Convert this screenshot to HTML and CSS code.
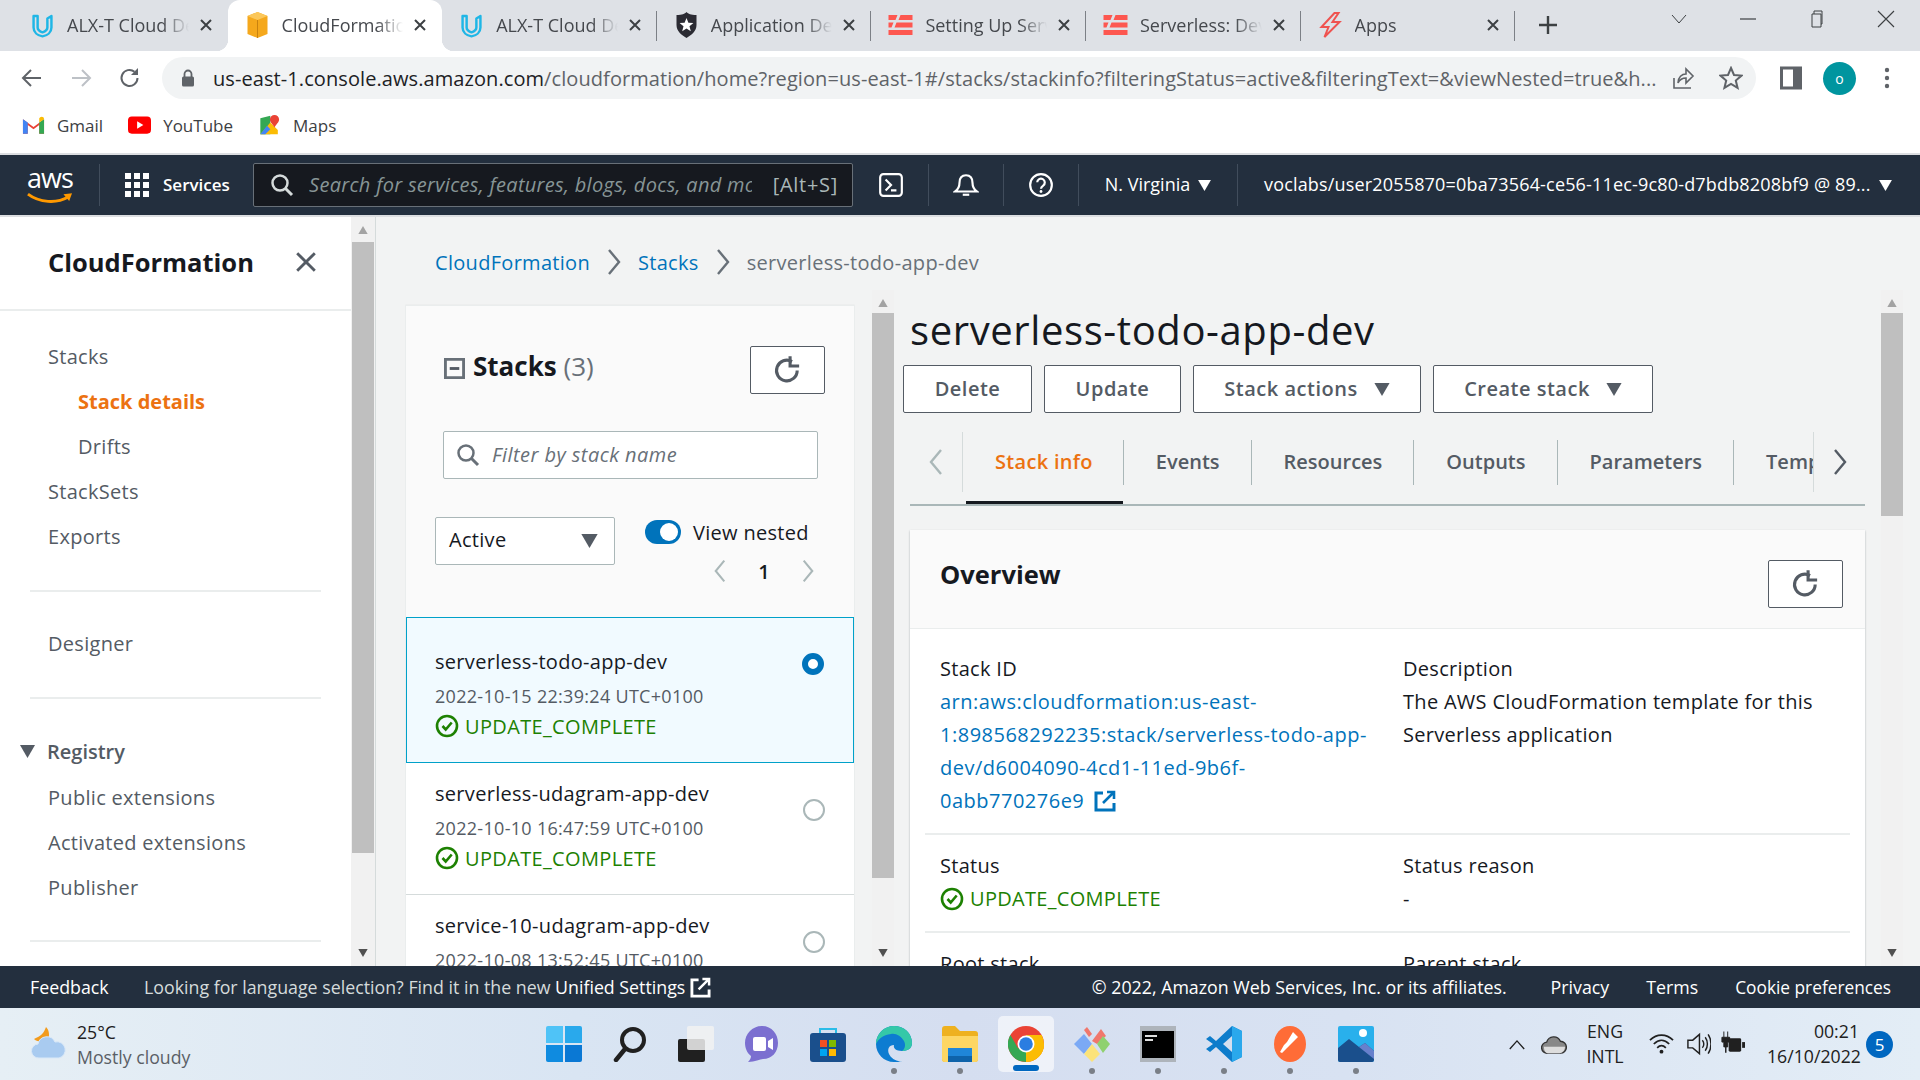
FILE: index.html
```html
<!DOCTYPE html>
<html lang="en">
<head>
<meta charset="utf-8">
<title>CloudFormation - Stack</title>
<link rel="stylesheet" href="styles.css">
</head>
<body>
<svg class="defs" width="0" height="0">
  <symbol id="x" viewBox="0 0 14 14"><path d="M2 2l10 10M12 2L2 12" fill="none" stroke="currentColor" stroke-width="2"/></symbol>
  <symbol id="udacity" viewBox="0 0 26 32"><path d="M2 5v14c0 6 5 10 11 11 6-1 11-5 11-11V5l-5 3v11c0 3-3 5-6 6-3-1-6-3-6-6V5z" fill="none" stroke="#1fb6e6" stroke-width="3" stroke-linejoin="round"/></symbol>
  <symbol id="sls" viewBox="0 0 24 20"><path d="M0 0h9l-2 5H0zM12 0h12v5H10zM0 7.500h5l-2 5H0zM8 7.500h16v5H6zM0 15h24v5H0z" fill="#fd5750"/></symbol>
  <symbol id="refresh" viewBox="0 0 24 24"><path d="M19.500 12a8 8 0 1 1-4-6.900" fill="none" stroke="currentColor" stroke-width="2.400"/><path d="M14 1v7.500h7" fill="none" stroke="currentColor" stroke-width="2.400"/></symbol>
  <symbol id="check" viewBox="0 0 24 24"><circle cx="12" cy="12" r="10" fill="none" stroke="currentColor" stroke-width="2.600"/><path d="M7.500 12l3.200 3.500 6-7" fill="none" stroke="currentColor" stroke-width="2.600"/></symbol>
  <symbol id="ext" viewBox="0 0 22 22"><path d="M9 3H2v17h18v-7" fill="none" stroke="currentColor" stroke-width="3"/><path d="M13 2h7v7M20 2L9 13" fill="none" stroke="currentColor" stroke-width="2.600"/></symbol>
  <symbol id="tri" viewBox="0 0 14 12"><path d="M0 0h14L7 12z" fill="currentColor"/></symbol>
  <symbol id="search" viewBox="0 0 24 24"><circle cx="10" cy="10" r="7.500" fill="none" stroke="currentColor" stroke-width="2.500"/><path d="M15.500 15.500L22 22" stroke="currentColor" stroke-width="3"/></symbol>
  <symbol id="chevl" viewBox="0 0 16 28"><path d="M13 2L3 14l10 12" fill="none" stroke="currentColor" stroke-width="2.400"/></symbol>
  <symbol id="chevr" viewBox="0 0 16 28"><path d="M3 2l10 12L3 26" fill="none" stroke="currentColor" stroke-width="2.400"/></symbol>
</svg>

<div class="tabstrip">
  <div class="tab"><svg class="favicon"><use href="#udacity"/></svg><span class="tab-title">ALX-T Cloud Developer</span><svg class="tab-x"><use href="#x"/></svg></div>
  <div class="tab tab-active"><svg class="favicon" viewBox="0 0 24 26"><path d="M12 0l10 4v18l-10 4-10-4V4z" fill="#f5a81c"/><path d="M12 0l10 4-10 4L2 4z" fill="#fbc75a"/><path d="M11.500 8h1v18h-1z" fill="#c9820f"/></svg><span class="tab-title">CloudFormation - Stack</span><svg class="tab-x"><use href="#x"/></svg></div>
  <div class="tab tab-sep"><svg class="favicon"><use href="#udacity"/></svg><span class="tab-title">ALX-T Cloud Developer</span><svg class="tab-x"><use href="#x"/></svg></div>
  <div class="tab tab-sep"><svg class="favicon" viewBox="0 0 24 26"><path d="M2 3c6 0 8-1 10-3 2 2 4 3 10 3v10c0 6-5 10-10 13C7 23 2 19 2 13z" fill="#2b2b33"/><path d="M12 6l1.900 4.800 5 .3-3.900 3.200 1.300 5L12 16.500l-4.300 2.800 1.300-5-3.900-3.200 5-.3z" fill="#fff"/></svg><span class="tab-title">Application Details</span><svg class="tab-x"><use href="#x"/></svg></div>
  <div class="tab tab-sep"><svg class="favicon favicon-sls"><use href="#sls"/></svg><span class="tab-title">Setting Up Serverless</span><svg class="tab-x"><use href="#x"/></svg></div>
  <div class="tab tab-sep"><svg class="favicon favicon-sls"><use href="#sls"/></svg><span class="tab-title">Serverless: Develop</span><svg class="tab-x"><use href="#x"/></svg></div>
  <div class="tab tab-sep"><svg class="favicon" viewBox="0 0 24 26"><path d="M16 1L3 15h7L6 25l15-15h-7l6-9z" fill="none" stroke="#ef5350" stroke-width="2"/></svg><span class="tab-title">Apps</span><svg class="tab-x"><use href="#x"/></svg></div>
  <svg class="newtab" viewBox="0 0 20 20"><path d="M10 1v18M1 10h18" stroke="#3c4043" stroke-width="2.400"/></svg>
  <div class="winctl">
    <svg class="win-ic" viewBox="0 0 20 20"><path d="M3 6l7 8 7-8" fill="none" stroke="#3c4043"/></svg>
    <svg class="win-ic" viewBox="0 0 20 20"><path d="M2 10h16" stroke="#3c4043" stroke-width="1.200"/></svg>
    <svg class="win-ic" viewBox="0 0 20 20"><path d="M5 5h9v13H5zM7 5V2h8v13h-1" fill="none" stroke="#3c4043"/></svg>
    <svg class="win-ic" viewBox="0 0 20 20"><path d="M2 2l16 16M18 2L2 18" stroke="#3c4043" stroke-width="1.100"/></svg>
  </div>
</div>

<div class="toolbar">
  <svg class="tb-ic" viewBox="0 0 24 24"><path d="M21 12H4M11 4l-8 8 8 8" fill="none" stroke="#5f6368" stroke-width="2"/></svg>
  <svg class="tb-ic" viewBox="0 0 24 24"><path d="M3 12h17M13 4l8 8-8 8" fill="none" stroke="#bdc1c6" stroke-width="2"/></svg>
  <svg class="tb-ic" viewBox="0 0 24 24"><path d="M19.500 12a8 8 0 1 1-3-6.300" fill="none" stroke="#5f6368" stroke-width="2"/><path d="M20 2v7h-7z" fill="#5f6368"/></svg>
  <div class="omnibox">
    <svg class="lock" viewBox="0 0 14 18"><path d="M3.500 8V5a3.500 3.500 0 0 1 7 0v3" fill="none" stroke="#5f6368" stroke-width="1.800"/><rect x="1" y="7.500" width="12" height="10" rx="1.500" fill="#5f6368"/></svg>
    <div class="url"><span class="url-host">us-east-1.console.aws.amazon.com</span>/cloudformation/home?region=us-east-1#/stacks/stackinfo?filteringStatus=active&amp;filteringText=&amp;viewNested=true&amp;h...</div>
    <svg class="omni-ic" viewBox="0 0 24 24"><path d="M3 12v10h17" fill="none" stroke="#5f6368" stroke-width="1.600"/><path d="M7 17c0-6 4-9 8-9V3l7 7-7 7v-5c-3 0-6 1-8 5z" fill="none" stroke="#5f6368" stroke-width="1.600"/></svg>
    <svg class="omni-ic omni-ic-star" viewBox="0 0 24 24"><path d="M12 2l3 7 7.500.6-5.700 4.900 1.800 7.400L12 18l-6.600 3.900 1.800-7.400L1.500 9.600 9 9z" fill="none" stroke="#5f6368" stroke-width="2"/></svg>
  </div>
  <svg class="panel-ic" viewBox="0 0 22 24"><path d="M1.500 2h19v20h-19z" fill="none" stroke="#5f6368" stroke-width="3"/><path d="M13 2h8v20h-8z" fill="#5f6368"/></svg>
  <div class="avatar">o</div>
  <svg class="dots" viewBox="0 0 6 24"><circle cx="3" cy="4" r="2.200" fill="#5f6368"/><circle cx="3" cy="12" r="2.200" fill="#5f6368"/><circle cx="3" cy="20" r="2.200" fill="#5f6368"/></svg>
</div>

<div class="bookmarks">
  <div class="bm"><svg class="bm-ic" viewBox="0 0 24 18"><path d="M1 18V3l11 8 11-8v15h-5V9l-6 4.500L6 9v9z" fill="#ea4335"/><path d="M1 18V3l5 3.500V18z" fill="#4285f4"/><path d="M23 18V3l-5 3.500V18z" fill="#34a853"/><path d="M18 6.500L23 3c0-3-3-3-4-2l-1 1z" fill="#fbbc04"/></svg>Gmail</div>
  <div class="bm"><svg class="bm-ic" viewBox="0 0 24 18"><rect width="24" height="18" rx="4" fill="#f00"/><path d="M9.500 5l6.500 4-6.500 4z" fill="#fff"/></svg>YouTube</div>
  <div class="bm"><svg class="bm-ic" viewBox="0 0 24 24"><path d="M1 4l12-3v22L1 23z" fill="#34a853"/><path d="M1 23L13 9l9 9v5z" fill="#fbbc04"/><path d="M1 23l8-10 4 4-6 6z" fill="#4285f4"/><path d="M18 0a5.500 5.500 0 0 1 5.500 5.500C23.500 9 20 11 18 15c-2-4-5.500-6-5.500-9.500A5.500 5.500 0 0 1 18 0z" fill="#ea4335"/></svg>Maps</div>
</div>

<header class="awsnav">
  <div class="aws-logo"><span class="aws-word">aws</span><svg class="aws-smile" viewBox="0 0 48 14"><path d="M1 2c12 9 30 10 42 3" fill="none" stroke="#ff9900" stroke-width="3"/><path d="M38 2l9-1-3 8z" fill="#ff9900"/></svg></div>
  <svg class="grid-ic" viewBox="0 0 24 24"><path d="M0 0h6v6H0zM9 0h6v6H9zM18 0h6v6h-6zM0 9h6v6H0zM9 9h6v6H9zM18 9h6v6h-6zM0 18h6v6H0zM9 18h6v6H9zM18 18h6v6h-6z" fill="#fff"/></svg>
  <span class="nav-services">Services</span>
  <div class="nav-search">
    <svg class="nav-search-ic"><use href="#search"/></svg>
    <span class="nav-search-text">Search for services, features, blogs, docs, and more</span>
    <span class="nav-search-key">[Alt+S]</span>
  </div>
  <div class="nav-cell nav-cell-term"><svg class="nav-ic" viewBox="0 0 24 24"><rect x="2" y="2" width="20" height="20" rx="3" fill="none" stroke="#fff" stroke-width="2"/><path d="M7 7l5 5-5 5M12 17h5" fill="none" stroke="#fff" stroke-width="2"/></svg></div>
  <div class="nav-cell nav-cell-bell"><svg class="nav-ic" viewBox="0 0 24 24"><path d="M12 3c-4 0-6 3-6 7 0 4-1 6-4 8h20c-3-2-4-4-4-8 0-4-2-7-6-7z" fill="none" stroke="#fff" stroke-width="2"/><path d="M9 21h6" stroke="#fff" stroke-width="2"/></svg></div>
  <div class="nav-cell nav-cell-help"><svg class="nav-ic" viewBox="0 0 24 24"><circle cx="12" cy="12" r="10" fill="none" stroke="#fff" stroke-width="2"/><path d="M8.500 9.500a3.500 3.500 0 1 1 5.500 3c-1.500 1-2 1.500-2 3" fill="none" stroke="#fff" stroke-width="2"/><circle cx="12" cy="18" r="1.300" fill="#fff"/></svg></div>
  <div class="nav-cell nav-cell-region"><span class="nav-label">N. Virginia</span><svg class="nav-tri"><use href="#tri"/></svg></div>
  <div class="nav-cell nav-cell-acct"><span class="nav-label nav-label-acct">voclabs/user2055870=0ba73564-ce56-11ec-9c80-d7bdb8208bf9 @ 89...</span><svg class="nav-tri"><use href="#tri"/></svg></div>
</header>

<div class="content">
  <nav class="sidenav">
    <div class="sidenav-head"><span class="sidenav-title">CloudFormation</span><svg class="sidenav-x" viewBox="0 0 20 20"><path d="M2 2l16 16M18 2L2 18" stroke="#545b64" stroke-width="2.600"/></svg></div>
    <ul class="navlist navlist-first">
      <li>Stacks</li>
      <li class="indent active">Stack details</li>
      <li class="indent">Drifts</li>
      <li>StackSets</li>
      <li>Exports</li>
    </ul>
    <hr class="nav-hr">
    <ul class="navlist"><li>Designer</li></ul>
    <hr class="nav-hr nav-hr-2">
    <ul class="navlist">
      <li class="nav-group"><svg class="group-tri"><use href="#tri"/></svg>Registry</li>
      <li>Public extensions</li>
      <li>Activated extensions</li>
      <li>Publisher</li>
    </ul>
    <hr class="nav-hr nav-hr-3">
  </nav>
  <div class="sbar sbar-nav"><svg class="sb-arrow"><use href="#tri"/></svg><div class="sb-thumb"></div><div class="sb-fill"></div><svg class="sb-arrow-d"><use href="#tri"/></svg></div>

  <main class="main">
    <div class="crumbs">
      <a class="link">CloudFormation</a><svg class="crumb-sep"><use href="#chevr"/></svg>
      <a class="link">Stacks</a><svg class="crumb-sep"><use href="#chevr"/></svg>
      <span class="crumb-cur">serverless-todo-app-dev</span>
    </div>
    <div class="panes">
      <section class="stacks-pane">
        <div class="stacks-card">
          <div class="stacks-head">
            <div class="stacks-title-row">
              <h2 class="stacks-title"><svg class="collapse-ic" viewBox="0 0 22 22"><path d="M1.500 1.500h19v19h-19z" fill="none" stroke="#687078" stroke-width="3"/><path d="M6 11h10" stroke="#545b64" stroke-width="3"/></svg>Stacks <span class="count">(3)</span></h2>
              <button class="btn btn-icon"><svg class="refresh-ic"><use href="#refresh"/></svg></button>
            </div>
            <div class="filter"><svg class="filter-ic"><use href="#search"/></svg><span class="filter-text">Filter by stack name</span></div>
            <div class="filter-row">
              <div class="select"><span class="select-text">Active</span><svg class="select-tri"><use href="#tri"/></svg></div>
              <div class="nest">
                <div class="nest-row"><span class="toggle"></span><span class="nest-label">View nested</span></div>
                <div class="pager"><svg class="pager-chev"><use href="#chevl"/></svg><span class="pager-num">1</span><svg class="pager-chev"><use href="#chevr"/></svg></div>
              </div>
            </div>
          </div>
          <div class="stack-item stack-item-sel">
            <div class="stack-body"><div class="stack-name">serverless-todo-app-dev</div><div class="stack-date">2022-10-15 22:39:24 UTC+0100</div><div class="status"><svg class="check-ic"><use href="#check"/></svg>UPDATE_COMPLETE</div></div>
            <span class="radio radio-on"></span>
          </div>
          <div class="stack-item">
            <div class="stack-body"><div class="stack-name">serverless-udagram-app-dev</div><div class="stack-date">2022-10-10 16:47:59 UTC+0100</div><div class="status"><svg class="check-ic"><use href="#check"/></svg>UPDATE_COMPLETE</div></div>
            <span class="radio"></span>
          </div>
          <div class="stack-item">
            <div class="stack-body"><div class="stack-name">service-10-udagram-app-dev</div><div class="stack-date">2022-10-08 13:52:45 UTC+0100</div></div>
            <span class="radio"></span>
          </div>
        </div>
      </section>
      <div class="sbar sbar-stacks"><svg class="sb-arrow"><use href="#tri"/></svg><div class="sb-thumb"></div><div class="sb-fill"></div><svg class="sb-arrow-d"><use href="#tri"/></svg></div>

      <section class="detail">
        <h1 class="detail-title">serverless-todo-app-dev</h1>
        <div class="actions">
          <button class="btn btn-act btn-delete"><span class="btn-label">Delete</span></button>
          <button class="btn btn-act btn-update"><span class="btn-label">Update</span></button>
          <button class="btn btn-act btn-stackact"><span class="btn-label">Stack actions</span><svg class="btn-tri"><use href="#tri"/></svg></button>
          <button class="btn btn-act btn-create"><span class="btn-label">Create stack</span><svg class="btn-tri"><use href="#tri"/></svg></button>
        </div>
        <div class="tabs">
          <div class="tab-nav tab-nav-l"><svg class="tab-chev tab-chev-off"><use href="#chevl"/></svg></div>
          <div class="tab-scroll">
            <div class="dtab dtab-active">Stack info</div>
            <div class="dtab">Events</div>
            <div class="dtab">Resources</div>
            <div class="dtab">Outputs</div>
            <div class="dtab">Parameters</div>
            <div class="dtab">Template</div>
          </div>
          <div class="tab-nav tab-nav-r"><svg class="tab-chev"><use href="#chevr"/></svg></div>
        </div>
        <div class="overview">
          <div class="ov-head"><h2 class="ov-title">Overview</h2><button class="btn btn-icon"><svg class="refresh-ic"><use href="#refresh"/></svg></button></div>
          <div class="ov-row ov-row-first">
            <div class="ov-col"><div>Stack ID</div><a class="link ov-link">arn:aws:cloudformation:us-east-<br>1:898568292235:stack/serverless-todo-app-<br>dev/d6004090-4cd1-11ed-9b6f-<br>0abb770276e9 <svg class="ext-ic"><use href="#ext"/></svg></a></div>
            <div class="ov-col"><div>Description</div><div>The AWS CloudFormation template for this<br>Serverless application</div></div>
          </div>
          <div class="ov-row">
            <div class="ov-col"><div>Status</div><div class="status"><svg class="check-ic"><use href="#check"/></svg>UPDATE_COMPLETE</div></div>
            <div class="ov-col"><div>Status reason</div><div>-</div></div>
          </div>
          <div class="ov-row">
            <div class="ov-col"><div>Root stack</div></div>
            <div class="ov-col"><div>Parent stack</div></div>
          </div>
        </div>
      </section>
      <div class="sbar sbar-detail"><svg class="sb-arrow"><use href="#tri"/></svg><div class="sb-thumb"></div><div class="sb-fill"></div><svg class="sb-arrow-d"><use href="#tri"/></svg></div>
    </div>
  </main>
</div>

<footer class="awsfoot">
  <span class="foot-fb">Feedback</span>
  <span class="foot-msg">Looking for language selection? Find it in the new <b class="foot-strong">Unified Settings</b><svg class="foot-ext"><use href="#ext"/></svg></span>
  <span class="foot-copy">© 2022, Amazon Web Services, Inc. or its affiliates.</span>
  <span class="foot-link foot-link-first">Privacy</span>
  <span class="foot-link">Terms</span>
  <span class="foot-link foot-link-last">Cookie preferences</span>
</footer>

<div class="taskbar">
  <div class="weather">
    <svg class="weather-ic" viewBox="0 0 38 36"><path d="M16 1c-2 6-5 9-12 12 3 3 10 4 14 1 2-5 1-10-2-13z" fill="#f29b1d"/><path d="M9 32a7 7 0 0 1-1-14 9 9 0 0 1 17-2 8 8 0 0 1 4 16z" fill="#a9cbf0" stroke="#d9e8f8"/></svg>
    <div class="weather-text"><div class="w-temp">25°C</div><div class="w-desc">Mostly cloudy</div></div>
  </div>
  <div class="tb-apps">
    <div class="app"><svg class="app-ic" viewBox="0 0 36 36"><path d="M0 2a2 2 0 0 1 2-2h15v17H0z" fill="#4fc3f7"/><path d="M19 0h15a2 2 0 0 1 2 2v15H19z" fill="#29a9ec"/><path d="M0 19h17v17H2a2 2 0 0 1-2-2z" fill="#0f8be0"/><path d="M19 19h17v15a2 2 0 0 1-2 2H19z" fill="#0a78d4"/></svg></div>
    <div class="app"><svg class="app-ic" viewBox="0 0 36 36"><circle cx="21" cy="14" r="11" fill="none" stroke="#202020" stroke-width="4"/><path d="M13 23L4 34" stroke="#202020" stroke-width="4.500" stroke-linecap="round"/></svg></div>
    <div class="app"><svg class="app-ic" viewBox="0 0 36 36"><rect x="0" y="13" width="27" height="23" rx="2" fill="#202020"/><rect x="9" y="0" width="27" height="24" rx="2" fill="#f2f2f2" fill-opacity=".85"/></svg></div>
    <div class="app"><svg class="app-ic" viewBox="0 0 36 36"><path d="M18 0c10 0 16 8 16 17s-6 16-15 16c-3 0-8 3-15 3 2-2 3-4 3-6-4-3-6-8-6-13C1 8 8 0 18 0z" fill="#7b6fd0"/><rect x="9" y="11" width="13" height="14" rx="2" fill="#fff"/><path d="M24 15l5-3v12l-5-3z" fill="#fff"/></svg></div>
    <div class="app"><svg class="app-ic" viewBox="0 0 36 36"><path d="M10 8V3h16v5" fill="none" stroke="#2bbce8" stroke-width="2"/><rect y="7" width="36" height="29" rx="3" fill="#1a4f8c"/><path d="M10 14h7v7h-7z" fill="#f25022"/><path d="M19 14h7v7h-7z" fill="#7fba00"/><path d="M10 23h7v7h-7z" fill="#00a4ef"/><path d="M19 23h7v7h-7z" fill="#ffb900"/></svg></div>
    <div class="app"><svg class="app-ic" viewBox="0 0 36 36"><path d="M18 0c10 0 18 7 18 17 0 6-5 8-10 8-6 0-9-3-8-6-5 0-7 4-5 9 2 4 7 8 13 7-3 1-5 1-8 1C8 36 0 28 0 18 0 8 8 0 18 0z" fill="#0d7cd1"/><path d="M0 18C0 8 8 0 18 0c10 0 18 7 18 17 0 6-5 8-10 8 3-2 4-6 2-10C25 10 20 7 15 8 7 9 2 13 0 18z" fill="#34c8a8"/></svg></div>
    <div class="app"><svg class="app-ic" viewBox="0 0 36 36"><path d="M0 3a3 3 0 0 1 3-3h10l5 5h15a3 3 0 0 1 3 3v25a3 3 0 0 1-3 3H3a3 3 0 0 1-3-3z" fill="#eeb11f"/><path d="M0 10h36v23a3 3 0 0 1-3 3H3a3 3 0 0 1-3-3z" fill="#fdd663"/><path d="M6 22h24v8H6z" fill="#1f86d8"/><path d="M6 30h24v6H6z" fill="#0e63aa"/></svg></div>
    <div class="app app-cur"><svg class="app-ic" viewBox="0 0 36 36"><circle cx="18" cy="18" r="18" fill="#ea4335"/><path d="M18 18L2.400 27A18 18 0 0 0 18 36z" fill="#34a853"/><path d="M18 18h18a18 18 0 0 1-18 18z" fill="#fbbc04"/><path d="M18 9h15.600A18 18 0 0 1 36 18c0 9-6 14-10 16L18 18z" fill="#fbbc04"/><path d="M2.400 9L11 24 2.400 27A18 18 0 0 1 2.400 9z" fill="#34a853"/><circle cx="18" cy="18" r="8.500" fill="#fff"/><circle cx="18" cy="18" r="6.800" fill="#2a7de1"/></svg></div>
    <div class="app"><svg class="app-ic" viewBox="0 0 36 36"><path d="M18 15L27 3l5 7-9 8z" fill="#f0776c"/><path d="M0 18l10-10 8 10-8 10z" fill="#7ba9f5"/><path d="M23 18l6-8 7 8-7 9z" fill="#8fd16f"/><path d="M10 28l8-10 8 10-8 8z" fill="#fbe37a"/><path d="M13 1l5 7-3 3-5-7z" fill="#f0776c"/></svg></div>
    <div class="app"><svg class="app-ic" viewBox="0 0 36 36"><rect width="36" height="36" fill="#aeb4bb"/><rect x="2" y="5" width="32" height="27" fill="#000"/><rect x="5" y="9" width="12" height="2" fill="#ddd"/><rect x="5" y="13" width="8" height="2" fill="#ddd"/></svg></div>
    <div class="app"><svg class="app-ic" viewBox="0 0 36 36"><path d="M26 0l10 5v26l-10 5-16-15-6 5-4-3 7-5-7-5 4-3 6 5z" fill="#0d7ccb"/><path d="M26 0l10 5v26l-10 5z" fill="#2aa8ec"/><path d="M26 10l-9 8 9 8z" fill="#d5dfef"/></svg></div>
    <div class="app"><svg class="app-ic" viewBox="0 0 36 36"><ellipse cx="18" cy="18" rx="16" ry="18" fill="#ff6c37"/><path d="M21 6l5 5-8 8-3 3-5 5-2-1 4-7 3-3z" fill="#fff"/></svg></div>
    <div class="app"><svg class="app-ic" viewBox="0 0 36 36"><rect width="36" height="36" rx="2" fill="#29b0ec"/><path d="M0 34V22l11-9 10 8 6-4 9 8v9a2 2 0 0 1-2 2H2a2 2 0 0 1-2-2z" fill="#1a4f8c"/><path d="M21 21l6-4 9 8v8z" fill="#6780cc"/><circle cx="25" cy="7" r="4" fill="#fff"/></svg></div>
  </div>
  <div class="tray">
    <svg class="tray-caret" viewBox="0 0 20 12"><path d="M2 11l8-9 8 9" fill="none" stroke="#202020" stroke-width="1.500"/></svg>
    <svg class="tray-cloud" viewBox="0 0 28 24"><path d="M7 22a6 6 0 0 1-1-12 8 8 0 0 1 15-1 6.500 6.500 0 0 1 0 13z" fill="#888" stroke="#333" stroke-width="1.500"/><path d="M3 15h23c0 4-3 7-6 7H7c-3 0-4-4-4-7z" fill="#ddd"/></svg>
    <div class="tray-lang"><div>ENG</div><div>INTL</div></div>
    <svg class="tray-ic" viewBox="0 0 26 26"><path d="M1 9c7-7 17-7 24 0M5 13c5-5 11-5 16 0M8.500 17c3-3 6-3 9 0" fill="none" stroke="#202020" stroke-width="1.800"/><circle cx="13" cy="21" r="2" fill="#202020"/></svg>
    <svg class="tray-ic" viewBox="0 0 26 26"><path d="M2 9h5l7-6v20l-7-6H2z" fill="none" stroke="#202020" stroke-width="1.500"/><path d="M17 9c2 2 2 6 0 8M20 6c3 4 3 10 0 14M23 3c4 6 4 14 0 20" fill="none" stroke="#202020" stroke-width="1.500"/></svg>
    <svg class="tray-ic tray-batt" viewBox="0 0 26 26"><path d="M4 0v6M8 0v6M2 6h8v5H8v5H4v-5H2z" fill="#202020" stroke="#202020"/><path d="M6 16v6" stroke="#202020" stroke-width="1.500"/><rect x="9" y="7" width="13" height="14" rx="1.500" fill="#202020"/><path d="M23 11h3v6h-3z" fill="#202020"/></svg>
    <div class="clock"><div>00:21</div><div>16/10/2022</div></div>
    <div class="notif">5</div>
  </div>
</div>
</body>
</html>
```

FILE: styles.css
```css
* { box-sizing: border-box; }
html, body { margin: 0; padding: 0; width: 1920px; height: 1080px; overflow: hidden; }
body { display: flex; flex-direction: column; font-family: "Open Sans", "Noto Sans", sans-serif; font-size: 20px; color: #16191f; background: #fff; }
.defs { position: absolute; }
ul { list-style: none; margin: 0; padding: 0; }
h1, h2 { margin: 0; font-weight: 400; }
button { font-family: inherit; }
svg { display: block; flex: none; }

/* browser tabs */
.tabstrip { height: 51px; flex: none; display: flex; align-items: stretch; padding-left: 13px; background: #dee1e6; }
.tab { position: relative; width: 214.6px; flex: none; display: flex; align-items: center; padding: 0 15px 2px 17px; font-size: 18px; color: #45484d; }
.tab-sep::after { content: ""; position: absolute; right: 0; top: 11px; height: 30px; width: 1px; background: #7c8086; }
.tab-active { background: #fff; border-radius: 12px 12px 0 0; }
.tab-active::before, .tab-active::after { content: ""; position: absolute; bottom: 0; width: 12px; height: 12px; }
.tab-active::before { left: -12px; background: radial-gradient(circle at 0 0, transparent 12px, #fff 12.500px); }
.tab-active::after { right: -12px; background: radial-gradient(circle at 100% 0, transparent 12px, #fff 12.500px); }
.favicon { width: 25px; height: 26px; }
.favicon-sls { height: 20px; }
.tab-title { flex: 1; min-width: 0; margin-left: 12px; white-space: nowrap; overflow: hidden; -webkit-mask-image: linear-gradient(to right, #000 78%, transparent 100%); mask-image: linear-gradient(to right, #000 78%, transparent 100%); }
.tab-x { width: 14px; height: 14px; margin-left: 10px; color: #3c4043; }
.newtab { width: 20px; height: 20px; margin: 15px 0 0 23px; }
.winctl { display: flex; align-items: center; margin-left: auto; padding: 0 24px 14px 0; gap: 49px; }
.win-ic { width: 20px; height: 20px; }

/* toolbar */
.toolbar { height: 51px; flex: none; display: flex; align-items: center; background: #fff; padding: 3px 0 0 20px; }
.tb-ic { width: 24px; height: 24px; margin-right: 25px; }
.omnibox { width: 1594px; height: 42px; margin-left: -5px; flex: none; display: flex; align-items: center; padding: 0 13px 0 19px; border-radius: 21px; background: #f1f3f4; }
.lock { width: 14px; height: 18px; }
.url { flex: 1; min-width: 0; margin-left: 18px; font-size: 20px; letter-spacing: .08px; color: #5f6368; white-space: nowrap; overflow: hidden; }
.url-host { color: #202124; }
.omni-ic { width: 24px; height: 24px; margin-left: 14px; }
.omni-ic-star { margin-left: 24px; }
.panel-ic { width: 22px; height: 24px; margin-left: 24px; }
.avatar { width: 33px; height: 33px; flex: none; margin-left: 21px; border-radius: 50%; background: #00959f; color: #fff; font-size: 14px; display: flex; align-items: center; justify-content: center; }
.dots { width: 6px; height: 24px; margin-left: 28px; }

/* bookmarks */
.bookmarks { height: 51px; flex: none; display: flex; align-items: center; padding: 0 0 5px 22px; font-size: 17px; color: #3c4043; background: #fff; }
.bm { display: flex; align-items: center; gap: 12px; margin-right: 25px; }
.bm-ic { width: 23px; height: 20px; }

/* aws nav */
.awsnav { height: 64px; flex: none; display: flex; align-items: center; border-top: 2px solid #dcdee1; border-bottom: 2px solid #dcdee1; background: #232f3e; color: #fff; font-size: 18px; }
.aws-logo { width: 100px; height: 42px; padding: 0 0 0 27px; border-right: 1px solid #414d5c; position: relative; }
.aws-word { display: block; font-size: 27px; line-height: 28px; letter-spacing: -1px; }
.aws-smile { width: 46px; height: 14px; }
.grid-ic { width: 24px; height: 24px; margin-left: 25px; }
.nav-services { margin-left: 14px; width: 90px; padding-bottom: 2px; font-size: 17px; font-weight: 600; }
.nav-search { width: 600px; height: 44px; flex: none; display: flex; align-items: center; background: #16191f; border: 1px solid #687078; border-radius: 2px; padding: 0 14px 0 16px; }
.nav-search-ic { width: 24px; height: 24px; color: #d5dbdb; }
.nav-search-text { width: 443px; margin-left: 15px; padding-bottom: 2px; font-style: italic; font-size: 20px; letter-spacing: .3px; color: #879596; white-space: nowrap; overflow: hidden; }
.nav-search-key { margin-left: auto; padding-bottom: 2px; color: #aab7b8; font-size: 20px; letter-spacing: .7px; }
.nav-cell { height: 42px; display: flex; align-items: center; justify-content: center; border-left: 1px solid #414d5c; }
.nav-cell-term { width: 75px; border-left: 0; }
.nav-cell-bell { width: 75px; }
.nav-cell-help { width: 75px; }
.nav-cell-region { width: 159px; gap: 8px; }
.nav-cell-acct { flex: 1; justify-content: flex-start; gap: 8px; padding-left: 26px; white-space: nowrap; }
.nav-label { padding-bottom: 2px; }
.nav-label-acct { letter-spacing: .17px; }
.nav-ic { width: 26px; height: 26px; }
.nav-tri { width: 13px; height: 11px; color: #fff; }

/* content */
.content { flex: 1; min-height: 0; display: flex; overflow: hidden; letter-spacing: .3px; }
.sidenav { width: 351px; flex: none; background: #fff; font-size: 20px; color: #545b64; }
.sidenav-head { height: 94px; display: flex; align-items: center; justify-content: space-between; padding: 0 34px 2px 48px; border-bottom: 2px solid #eaeded; }
.sidenav-title { font-size: 25.5px; font-weight: 700; letter-spacing: 0; color: #16191f; }
.sidenav-x { width: 22px; height: 22px; }
.navlist li { height: 45px; line-height: 45px; padding-left: 48px; }
.navlist-first { padding-top: 23px; }
.navlist .indent { padding-left: 78px; }
.navlist .active { color: #ec7211; font-weight: 700; letter-spacing: 0; }
.navlist .nav-group { position: relative; height: 46px; font-weight: 600; letter-spacing: 0; padding-left: 47px; }
.group-tri { position: absolute; left: 20px; top: 16px; width: 15px; height: 13px; color: #545b64; }
.nav-hr { margin: 31px 30px 29px; border: 0; border-top: 2px solid #eaeded; }
.nav-hr-2 { margin-bottom: 30px; }
.nav-hr-3 { margin-top: 30px; }

/* fake scrollbars */
.sbar { flex: none; display: flex; flex-direction: column; align-items: center; background: #f1f1f1; overflow: hidden; }
.sb-arrow { width: 10px; height: 8px; margin-top: 9px; color: #a3a3a3; transform: rotate(180deg); flex: none; }
.sb-thumb { width: 100%; background: #bfbfbf; flex: none; }
.sb-fill { flex: 1; }
.sb-arrow-d { width: 10px; height: 8px; margin-bottom: 9px; color: #505050; flex: none; }
.sbar-nav { width: 24px; }
.sbar-nav .sb-thumb { height: 611px; margin-top: 8px; width: 22px; }
.sbar-stacks { width: 22px; margin: 0 0 0 17px; }
.sbar-stacks .sb-thumb { height: 565px; margin-top: 6px; }
.sbar-detail { width: 22px; margin-left: 0; }
.sbar-detail .sb-thumb { height: 203px; margin-top: 6px; }

/* main */
.main { flex: 1; min-width: 0; display: flex; flex-direction: column; background: #f2f3f3; border-left: 1px solid #d5dbdb; }
.crumbs { height: 73px; flex: none; display: flex; align-items: center; padding: 17px 0 0 59px; color: #545b64; }
.link { color: #0073bb; }
.crumb-sep { width: 16px; height: 28px; margin: 0 16px; color: #687078; }
.crumb-cur { color: #687078; }
.panes { flex: 1; min-height: 0; display: flex; padding: 0 17px 0 29px; }
.stacks-pane { width: 450px; flex: none; padding-top: 15px; overflow: hidden; }
.stacks-card { background: #fafafa; border: 1px solid #eaeded; border-bottom: 0; box-shadow: 0 1px 2px rgba(0,28,36,.3); }
.stacks-head { height: 311px; padding: 40px 29px 0 29px; }
.stacks-title-row { display: flex; justify-content: space-between; align-items: flex-start; padding-left: 9px; }
.stacks-title { display: flex; align-items: center; font-size: 26px; font-weight: 700; letter-spacing: 0; line-height: 34px; margin-top: 3px; white-space: pre; }
.count { font-weight: 400; color: #687078; }
.collapse-ic { width: 21px; height: 21px; margin: 5px 8px 0 0; }
.btn { background: #fff; border: 1px solid #545b64; border-radius: 2px; color: #545b64; padding: 0; }
.btn-icon { width: 75px; height: 48px; display: flex; align-items: center; justify-content: center; }
.refresh-ic { width: 31px; height: 31px; }
.filter { height: 48px; margin: 37px 7px 0 8px; display: flex; align-items: center; padding-left: 12px; background: #fff; border: 1px solid #aab7b8; border-radius: 2px; font-style: italic; color: #687078; }
.filter-ic { width: 24px; height: 24px; color: #687078; margin-right: 12px; }
.filter-text { padding-bottom: 2px; letter-spacing: .45px; }
.filter-row { display: flex; margin-top: 38px; }
.select { width: 180px; height: 48px; display: flex; align-items: center; justify-content: space-between; padding: 0 16px 0 13px; background: #fff; border: 1px solid #aab7b8; border-radius: 2px; color: #16191f; }
.select-text { padding-bottom: 4px; }
.select-tri { width: 17px; height: 14px; color: #545b64; }
.nest { margin-left: 30px; }
.nest-row { display: flex; align-items: center; height: 32px; margin-top: -1px; }
.toggle { position: relative; width: 36px; height: 24px; border-radius: 12px; background: #0073bb; }
.toggle::after { content: ""; position: absolute; right: 3px; top: 3px; width: 18px; height: 18px; border-radius: 50%; background: #fff; }
.nest-label { margin-left: 12px; color: #16191f; }
.pager { display: flex; align-items: center; height: 24px; margin: 11px 0 0 68px; }
.pager-chev { width: 14px; height: 24px; color: #aab7b8; }
.pager-num { width: 58px; margin: 0 8px; text-align: center; font-weight: 600; }
.stack-item { display: flex; padding: 14px 29px 0 29px; height: 132px; background: #fff; border-bottom: 1px solid #d5dbdb; }
.stack-item-sel { height: 146px; padding: 27px 29px 0 28px; background: #f1faff; border: 1px solid #00a1c9; }
.stack-body { flex: 1; }
.stack-name { height: 34px; line-height: 34px; }
.stack-date { height: 34px; line-height: 34px; font-size: 18px; color: #545b64; }
.stack-item .status { height: 30px; margin-top: -2px; letter-spacing: .35px; }
.status { display: flex; align-items: center; color: #1d8102; }
.check-ic { width: 24px; height: 24px; margin-right: 6px; }
.radio { width: 22px; height: 22px; margin-top: 22px; border-radius: 50%; background: #fff; border: 2px solid #aab7b8; flex: none; }
.radio-on { margin-top: 8px; border: 6px solid #0073bb; }

/* detail */
.detail { flex: 1; min-width: 0; padding-left: 16px; padding-right: 16px; overflow: hidden; }
.detail-title { font-size: 40px; line-height: 60px; margin-top: 10px; letter-spacing: .6px; color: #16191f; }
.actions { display: flex; gap: 12px; margin: 5px 0 0 -7px; }
.btn-act { height: 48px; font-size: 20px; font-weight: 600; display: flex; align-items: center; justify-content: center; letter-spacing: .5px; }
.btn-label { padding-bottom: 2px; }
.btn-delete { width: 129px; }
.btn-update { width: 137px; }
.btn-stackact { width: 228px; }
.btn-create { width: 220px; }
.btn-tri { width: 16px; height: 13px; margin-left: 16px; }
.tabs { height: 81px; margin-top: 12px; display: flex; border-bottom: 2px solid #aab7b8; }
.tab-nav { display: flex; justify-content: center; height: 60px; align-items: center; margin-top: 7px; flex: none; }
.tab-nav-l { width: 53px; border-right: 1px solid #d5dbdb; }
.tab-nav-r { flex: 1; border-left: 1px solid #d5dbdb; }
.tab-chev { width: 16px; height: 28px; color: #545b64; }
.tab-chev-off { color: #aab7b8; }
.tab-scroll { width: 850px; flex: none; display: flex; overflow: hidden; }
.dtab { position: relative; flex: none; height: 79px; padding: 14px 32px 0 32px; font-weight: 600; letter-spacing: 0; color: #545b64; white-space: nowrap; line-height: 45px; }
.dtab::before { content: ""; position: absolute; right: 0; top: 15px; height: 45px; width: 1px; background: #aab7b8; }
.dtab-active { color: #ec7211; letter-spacing: .3px; padding-right: 31px; }
.dtab-active::after { content: ""; position: absolute; left: 3px; right: 1px; bottom: 0; height: 3px; background: #16191f; }
.overview { margin-top: 24px; background: #fff; box-shadow: 0 1px 2px rgba(0,28,36,.3); }
.ov-head { height: 99px; display: flex; justify-content: space-between; padding: 30px 22px 0 30px; background: #fafafa; border-bottom: 1px solid #eaeded; }
.ov-title { font-size: 25.5px; font-weight: 700; line-height: 30px; margin-top: -1px; letter-spacing: 0; }
.ov-row { display: flex; margin: 0 15px; padding: 14px 15px 16px; line-height: 33px; border-bottom: 2px solid #eaeded; }
.ov-row-first { padding-top: 23px; }
.ov-col { width: 463px; flex: none; }
.ov-link { display: block; letter-spacing: .5px; }
.ext-ic { display: inline-block; width: 22px; height: 22px; vertical-align: -4px; margin-left: 4px; }

/* footer */
.awsfoot { height: 42px; flex: none; display: flex; align-items: center; padding: 0 29px 0 30px; background: #232f3e; color: #fff; font-size: 17.8px; font-weight: 500; }
.foot-fb { width: 114px; }
.foot-msg { display: flex; align-items: center; color: #d5dbdb; white-space: pre; font-weight: 400; }
.foot-strong { color: #fff; font-weight: 500; }
.foot-ext { width: 21px; height: 21px; margin-left: 5px; color: #fff; }
.foot-copy { margin-left: auto; }
.foot-link { margin-left: 37px; }
.foot-link-first { margin-left: 44px; }
.foot-link-last { font-size: 17.3px; }

/* taskbar */
.taskbar { height: 72px; flex: none; display: flex; align-items: center; background: linear-gradient(90deg, #e6eff5 0%, #d9e5f3 30%, #d5def0 50%, #d8e2f2 70%, #e3edf6 100%); color: #202020; font-size: 17.7px; }
.weather { width: 531px; flex: none; display: flex; align-items: center; padding-left: 30px; }
.weather-ic { width: 38px; height: 36px; }
.weather-text { margin-left: 9px; padding-top: 2px; line-height: 25px; }
.w-desc { color: #5a5f66; }
.tb-apps { display: flex; }
.app { position: relative; width: 66px; height: 56px; display: flex; align-items: center; justify-content: center; }
.app-ic { width: 36px; height: 36px; }
.app:not(:nth-child(-n+5))::after { content: ""; position: absolute; left: 30px; bottom: -2px; width: 6px; height: 6px; border-radius: 50%; background: #7a7f87; }
.app-cur { background: rgba(255,255,255,.6); border-radius: 5px; margin: 0 5px; width: 56px; }
.app:not(:nth-child(-n+5)).app-cur::after { left: 15px; width: 26px; height: 6px; bottom: 1px; border-radius: 3px; background: #0067c0; }
.tray { flex: 1; display: flex; align-items: center; padding-left: 119px; }
.tray-caret { width: 18px; height: 11px; }
.tray-cloud { width: 26px; height: 22px; margin-left: 15px; }
.tray-lang { margin-left: 8px; margin-right: 2px; width: 60px; line-height: 25px; text-align: center; }
.tray-ic { width: 25px; height: 26px; margin-left: 12px; }
.tray-batt { margin-left: 9px; }
.clock { margin-left: 22px; width: 92px; text-align: right; line-height: 25px; white-space: nowrap; }
.notif { width: 27px; height: 27px; margin-left: 7px; border-radius: 50%; background: #0067c0; color: #fff; font-size: 17px; display: flex; align-items: center; justify-content: center; }
```
